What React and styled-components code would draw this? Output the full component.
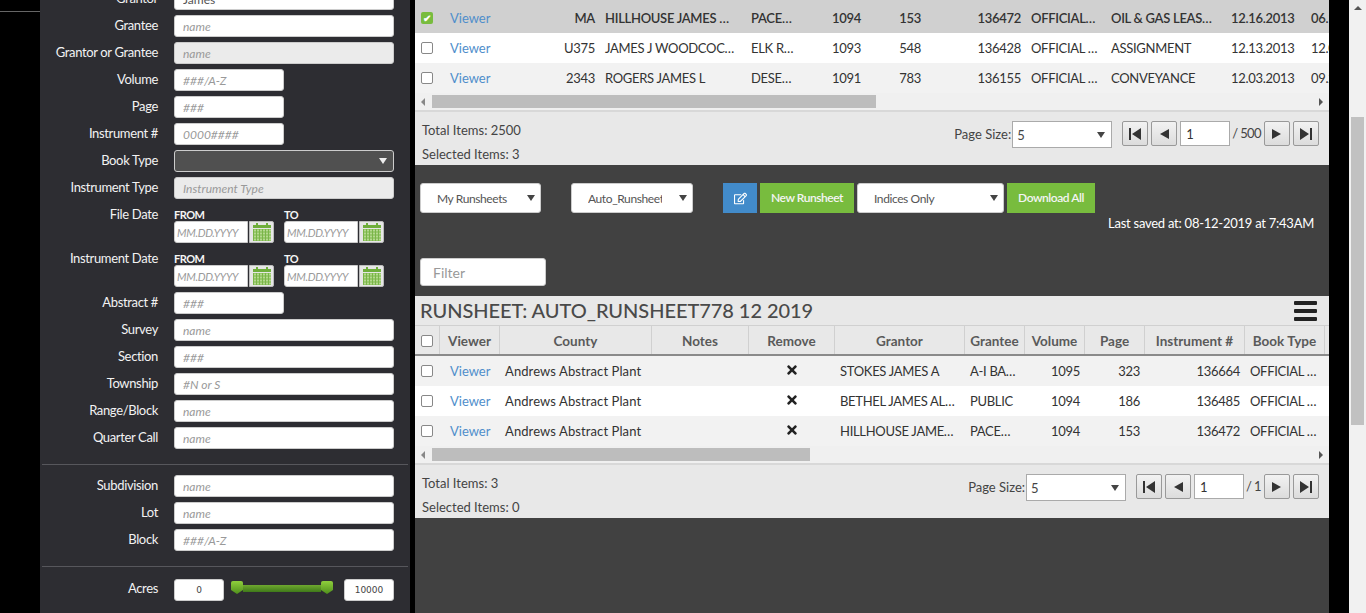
import React from 'react';
import styled, { createGlobalStyle } from 'styled-components';
import { FaRegEdit, FaTimes } from 'react-icons/fa';

const font = '"Lato", "Liberation Sans", sans-serif';

const topCols = [25, 60, 100, 146, 60, 60, 60, 100, 80, 120, 80, 80];
const bottomCols = [25, 60, 152, 97, 86, 130, 60, 60, 60, 100, 80, 80];

const topRows = [
  { selected: true, cells: ['MA', 'HILLHOUSE JAMES …', 'PACE…', '1094', '153', '136472', 'OFFICIAL…', 'OIL & GAS LEAS…', '12.16.2013', '06.16.2014'] },
  { cells: ['U375', 'JAMES J WOODCOC…', 'ELK R…', '1093', '548', '136428', 'OFFICIAL …', 'ASSIGNMENT', '12.13.2013', '12.01.2013'] },
  { cells: ['2343', 'ROGERS JAMES L', 'DESE…', '1091', '783', '136155', 'OFFICIAL …', 'CONVEYANCE', '12.03.2013', '09.25.2013'] },
];
const topRight = [true, false, false, true, true, true, false, false, false, false];

const bottomRows = [
  ['STOKES JAMES A', 'A-I BA…', '1095', '323', '136664', 'OFFICIAL …'],
  ['BETHEL JAMES AL…', 'PUBLIC', '1094', '186', '136485', 'OFFICIAL …'],
  ['HILLHOUSE JAME…', 'PACE…', '1094', '153', '136472', 'OFFICIAL …'],
];
const bottomHead = ['Viewer', 'County', 'Notes', 'Remove', 'Grantor', 'Grantee', 'Volume', 'Page', 'Instrument #', 'Book Type'];

const Calendar = () => (
  <svg width="18" height="18" viewBox="0 0 18 18">
    <rect x="3" y="0" width="2" height="3" fill="#6fae3c" />
    <rect x="13" y="0" width="2" height="3" fill="#6fae3c" />
    <rect x="0" y="2" width="18" height="3" fill="#6fae3c" />
    <rect x="0" y="6" width="18" height="12" fill="#7ab648" />
    {[7, 10, 13, 16].map((y) =>
      [1, 4, 7, 10, 13, 16].map((x) => <rect key={x + '-' + y} x={x} y={y - 0.5} width="2" height="2" fill="#b5d98f" />)
    )}
  </svg>
);

const PagerIcon = ({ kind }) => (
  <svg width="14" height="12" viewBox="0 0 14 12" fill="#333">
    {kind === 'first' && <path d="M1 0h2v12H1zM13 0v12L4 6z" />}
    {kind === 'prev' && <path d="M12 1v10L3 6z" />}
    {kind === 'next' && <path d="M2 1v10l9-5z" />}
    {kind === 'last' && <path d="M11 0h2v12h-2zM1 0v12l9-6z" />}
  </svg>
);

const Pager = ({ total }) => (
  <PagerBox>
    <PageLabel>Page Size:</PageLabel>
    <PageSelect>5<Caret /></PageSelect>
    <PagerBtn $ml={10}><PagerIcon kind="first" /></PagerBtn>
    <PagerBtn $ml={3}><PagerIcon kind="prev" /></PagerBtn>
    <PageInput readOnly value="1" />
    <PageOf>/ {total}</PageOf>
    <PagerBtn><PagerIcon kind="next" /></PagerBtn>
    <PagerBtn $ml={3}><PagerIcon kind="last" /></PagerBtn>
  </PagerBox>
);

const HScroll = ({ width }) => (
  <ScrollRow>
    <ScrollArrow $dir="left" />
    <ScrollThumb style={{ width }} />
    <ScrollArrow $dir="right" />
  </ScrollRow>
);

const Field = ({ label, placeholder, value, short, disabled }) => (
  <Row>
    <Label>{label}</Label>
    <TextInput $short={short} $disabled={disabled} placeholder={placeholder} defaultValue={value} readOnly />
  </Row>
);

const DateField = ({ label }) => (
  <DateRow>
    <Label>{label}</Label>
    {['FROM', 'TO'].map((t) => (
      <DateCol key={t}>
        <DateCaption>{t}</DateCaption>
        <DateGroup>
          <DateInput placeholder="MM.DD.YYYY" readOnly />
          <CalButton><Calendar /></CalButton>
        </DateGroup>
      </DateCol>
    ))}
  </DateRow>
);

const App = () => (
  <Shell>
    <GlobalStyle />
    <Gutter><GutterLine /></Gutter>
    <Sidebar>
      <Field label="Grantor" value="James" />
      <Field label="Grantee" placeholder="name" />
      <Field label="Grantor or Grantee" placeholder="name" disabled />
      <Field label="Volume" placeholder="###/A-Z" short />
      <Field label="Page" placeholder="###" short />
      <Field label="Instrument #" placeholder="0000####" short />
      <Row>
        <Label>Book Type</Label>
        <DarkSelect><Caret $light /></DarkSelect>
      </Row>
      <Field label="Instrument Type" placeholder="Instrument Type" disabled />
      <DateField label="File Date" />
      <DateField label="Instrument Date" />
      <Field label="Abstract #" placeholder="###" short />
      <Field label="Survey" placeholder="name" />
      <Field label="Section" placeholder="###" />
      <Field label="Township" placeholder="#N or S" />
      <Field label="Range/Block" placeholder="name" />
      <Field label="Quarter Call" placeholder="name" />
      <Divider />
      <Field label="Subdivision" placeholder="name" />
      <Field label="Lot" placeholder="name" />
      <Field label="Block" placeholder="###/A-Z" />
      <Divider $after={12} />
      <Row>
        <Label $raised>Acres</Label>
        <AcreInput readOnly value="0" />
        <Slider>
          <Handle />
          <SliderTrack />
          <Handle />
        </Slider>
        <AcreInput readOnly value="10000" />
      </Row>
    </Sidebar>
    <Main>
      <TopTable>
        {topRows.map((r, i) => (
          <TableRow key={i} $tone={r.selected ? 'selected' : i % 2 ? 'white' : 'grey'}>
            <Cell $w={topCols[0]} $check>{r.selected ? <CheckedBox>✔</CheckedBox> : <CheckBox />}</Cell>
            <Cell $w={topCols[1]}><ViewerLink>Viewer</ViewerLink></Cell>
            {r.cells.map((c, j) => (
              <Cell key={j} $w={topCols[j + 2]} $right={topRight[j]}>{c}</Cell>
            ))}
          </TableRow>
        ))}
      </TopTable>
      <HScroll width={444} />
      <Footer>
        <Counts>
          <div>Total Items: 2500</div>
          <div>Selected Items: 3</div>
        </Counts>
        <Pager total={500} />
      </Footer>

      <Toolbar>
        <ToolRow>
          <PlainSelect $w={121} $mr={27}>My Runsheets<Caret /></PlainSelect>
          <PlainSelect $w={122} $mr={27}><Clip>Auto_Runsheet</Clip><Caret /></PlainSelect>
          <EditButton><FaRegEdit size={13} /></EditButton>
          <GreenButton $w={94}>New Runsheet</GreenButton>
          <PlainSelect $w={147}>Indices Only<Caret /></PlainSelect>
          <GreenButton $w={88}>Download All</GreenButton>
        </ToolRow>
        <SavedAt>Last saved at: 08-12-2019 at 7:43AM</SavedAt>
        <FilterInput placeholder="Filter" readOnly />
      </Toolbar>

      <SheetHead>
        <SheetTitle>RUNSHEET: AUTO_RUNSHEET778 12 2019</SheetTitle>
        <Burger><i /><i /><i /></Burger>
      </SheetHead>
      <HeadRow>
        <HeadCell $w={bottomCols[0]} $check><CheckBox /></HeadCell>
        {bottomHead.map((h, i) => (
          <HeadCell key={h} $w={bottomCols[i + 1]}>{h}</HeadCell>
        ))}
      </HeadRow>
      {bottomRows.map((r, i) => (
        <TableRow key={i} $tone={i % 2 ? 'white' : 'grey'}>
          <Cell $w={bottomCols[0]} $check><CheckBox /></Cell>
          <Cell $w={bottomCols[1]}><ViewerLink>Viewer</ViewerLink></Cell>
          <Cell $w={bottomCols[2]} $plain>Andrews Abstract Plant</Cell>
          <Cell $w={bottomCols[3]} />
          <Cell $w={bottomCols[4]} $center><FaTimes size={14} color="#222" /></Cell>
          <Cell $w={bottomCols[5]}>{r[0]}</Cell>
          <Cell $w={bottomCols[6]}>{r[1]}</Cell>
          <Cell $w={bottomCols[7]} $right>{r[2]}</Cell>
          <Cell $w={bottomCols[8]} $right>{r[3]}</Cell>
          <Cell $w={bottomCols[9]} $right>{r[4]}</Cell>
          <Cell $w={bottomCols[10]}>{r[5]}</Cell>
        </TableRow>
      ))}
      <HScroll width={378} />
      <Footer>
        <Counts>
          <div>Total Items: 3</div>
          <div>Selected Items: 0</div>
        </Counts>
        <Pager total={1} />
      </Footer>
    </Main>
    <PageScroll>
      <PageScrollUp />
      <PageScrollThumb />
    </PageScroll>
  </Shell>
);

export default App;

const GlobalStyle = createGlobalStyle`
  html, body { margin: 0; padding: 0; overflow: hidden; background: #000; }
  body { font-family: ${font}; }
  * { box-sizing: border-box; }
  input::placeholder { color: #999; opacity: 1; }
`;

const Shell = styled.div`
  display: flex;
  height: 613px;
  overflow: hidden;
  background: #000;
`;

const Gutter = styled.div`
  width: 40px;
  flex: none;
`;

const GutterLine = styled.div`
  height: 12px;
  border-bottom: 1px solid #666;
`;

const Sidebar = styled.div`
  width: 370px;
  flex: none;
  height: 613px;
  background: #2d2d32;
  padding: 0 16px 0 0;
  overflow: hidden;
  & > :first-child { margin-top: -12px; }
`;

const Row = styled.div`
  display: flex;
  align-items: center;
  height: 22px;
  margin-bottom: 5px;
`;

const Label = styled.div`
  width: 118px;
  flex: none;
  margin-right: 16px;
  padding-bottom: ${(p) => (p.$raised ? '5px' : '2px')};
  text-align: right;
  color: #f2f2f2;
  font-size: 13px;
  letter-spacing: -0.35px;
  line-height: 20px;
  white-space: nowrap;
`;

const TextInput = styled.input`
  width: ${(p) => (p.$short ? '110px' : '220px')};
  height: 22px;
  padding: 0 8px;
  border: 1px solid #ccc;
  border-radius: 3px;
  background: ${(p) => (p.$disabled ? '#ebebeb' : '#fff')};
  font: 12px ${font};
  color: #555;
  outline: none;
  &::placeholder { font-style: italic; }
`;

const DarkSelect = styled.div`
  width: 220px;
  height: 22px;
  display: flex;
  align-items: center;
  justify-content: flex-end;
  padding-right: 6px;
  background: #505050;
  border: 1px solid #ccc;
  border-radius: 3px;
`;

const Caret = styled.span`
  width: 0;
  height: 0;
  margin-left: auto;
  border-left: 4px solid transparent;
  border-right: 4px solid transparent;
  border-top: 6px solid ${(p) => (p.$light ? '#eee' : '#444')};
`;

const DateRow = styled.div`
  display: flex;
  height: 39px;
  margin-bottom: 5px;
  align-items: flex-start;
`;

const DateCol = styled.div`
  width: 110px;
`;

const DateCaption = styled.div`
  height: 17px;
  padding-top: 5px;
  font-size: 11px;
  line-height: 12px;
  font-weight: 700;
  letter-spacing: -0.5px;
  color: #f5f5f5;
`;

const DateGroup = styled.div`
  display: flex;
`;

const DateInput = styled.input`
  width: 74px;
  height: 22px;
  padding: 0 2px;
  border: 1px solid #ccc;
  border-radius: 3px 0 0 3px;
  background: #fff;
  font: italic 11px ${font};
  letter-spacing: -0.3px;
  outline: none;
`;

const CalButton = styled.div`
  width: 25px;
  height: 22px;
  margin-left: 1px;
  display: flex;
  align-items: center;
  justify-content: center;
  background: #e6e6e6;
  border: 1px solid #bbb;
  border-radius: 0 2px 2px 0;
`;

const Divider = styled.div`
  height: 1px;
  margin: 15px -14px ${(p) => p.$after || 10}px 2px;
  background: #57575c;
`;

const AcreInput = styled.input`
  width: 50px;
  height: 22px;
  border: 1px solid #ccc;
  border-radius: 3px;
  background: #fff;
  text-align: center;
  font: 9px "DejaVu Sans", sans-serif;
  color: #444;
  outline: none;
`;

const Slider = styled.div`
  width: 120px;
  padding: 0 11px 0 7px;
  display: flex;
  align-items: center;
`;

const Handle = styled.div`
  width: 12px;
  height: 13px;
  flex: none;
  margin-top: -5px;
  background: linear-gradient(#8fcf3c, #4f8f1c);
  clip-path: polygon(0 0, 100% 0, 100% 70%, 50% 100%, 0 70%);
  border-radius: 2px 2px 0 0;
`;

const SliderTrack = styled.div`
  flex: 1;
  height: 7px;
  margin-top: -3px;
  background: linear-gradient(#6fa82f, #3f7a1a);
`;

const Main = styled.div`
  width: 914px;
  flex: none;
  margin-left: 5px;
  background: #414141;
  overflow: hidden;
  font-size: 13px;
  color: #333;
`;

const TopTable = styled.div`
  padding-top: 3px;
  background: #d0d0d0;
`;

const tones = { selected: '#d0d0d0', white: '#fff', grey: '#f2f2f2' };

const TableRow = styled.div`
  display: flex;
  height: 30px;
  align-items: center;
  background: ${(p) => tones[p.$tone]};
  font-weight: ${(p) => (p.$tone === 'selected' ? 600 : 400)};
`;

const Cell = styled.div`
  width: ${(p) => p.$w}px;
  flex: none;
  padding: ${(p) => (p.$check ? '0 0 0 6px' : '0 5px')};
  letter-spacing: ${(p) => (p.$plain ? '0.1px' : '-0.3px')};
  text-align: ${(p) => (p.$right ? 'right' : p.$center ? 'center' : 'left')};
  white-space: nowrap;
  overflow: hidden;
  display: ${(p) => (p.$check ? 'flex' : 'block')};
`;

const CheckBox = styled.span`
  display: block;
  width: 12px;
  height: 12px;
  border: 1px solid #888;
  border-radius: 2px;
  background: #fff;
`;

const CheckedBox = styled.span`
  display: flex;
  align-items: center;
  justify-content: center;
  width: 12px;
  height: 12px;
  border-radius: 2px;
  background: #78bc3e;
  color: #fff;
  font-size: 10px;
  line-height: 1;
`;

const ViewerLink = styled.span`
  color: #4f8ecb;
  margin-left: 5px;
  font-weight: 400;
  letter-spacing: 0;
`;

const ScrollRow = styled.div`
  display: flex;
  align-items: center;
  height: 17px;
  padding: 0 6px;
  background: #f0f0f0;
`;

const ScrollArrow = styled.span`
  width: 0;
  height: 0;
  border-top: 4px solid transparent;
  border-bottom: 4px solid transparent;
  ${(p) => (p.$dir === 'left'
    ? 'border-right: 4px solid #888; margin-right: 7px;'
    : 'border-left: 4px solid #555; margin-left: auto;')}
`;

const ScrollThumb = styled.div`
  height: 13px;
  background: #bdbdbd;
`;

const Footer = styled.div`
  display: flex;
  justify-content: space-between;
  height: 55px;
  padding: 6px 10px 0 7px;
  background: #e8e8e8;
  border-top: 2px solid #d8d8d8;
  color: #444;
`;

const Counts = styled.div`
  line-height: 24px;
`;

const PagerBox = styled.div`
  display: flex;
  align-items: flex-start;
  padding-top: 3px;
`;

const PageLabel = styled.span`
  line-height: 27px;
  margin-right: 1px;
`;

const PageSelect = styled.div`
  width: 100px;
  height: 27px;
  display: flex;
  align-items: center;
  padding: 0 6px 0 4px;
  background: #fff;
  border: 1px solid #aaa;
`;

const PagerBtn = styled.div`
  width: 26px;
  height: 25px;
  margin-left: ${(p) => p.$ml || 0}px;
  display: flex;
  align-items: center;
  justify-content: center;
  background: linear-gradient(#f2f2f2, #dcdcdc);
  border: 1px solid #999;
  border-radius: 2px;
`;

const PageInput = styled.input`
  width: 50px;
  height: 25px;
  margin-left: 3px;
  padding: 0 5px;
  border: 1px solid #aaa;
  background: #fff;
  font: 13px ${font};
  color: #333;
  outline: none;
`;

const PageOf = styled.span`
  line-height: 24px;
  margin: 0 3px 0 2px;
  letter-spacing: -0.6px;
`;

const Toolbar = styled.div`
  height: 131px;
  padding: 18px 0 0 5px;
`;

const ToolRow = styled.div`
  display: flex;
  height: 30px;
  gap: 3px;
`;

const PlainSelect = styled.div`
  width: ${(p) => p.$w}px;
  margin-right: ${(p) => p.$mr || 0}px;
  height: 30px;
  display: flex;
  align-items: center;
  padding: 0 5px 0 16px;
  background: #fff;
  border: 1px solid #ccc;
  border-radius: 3px;
  font-size: 12px;
  letter-spacing: -0.4px;
  color: #555;
`;

const Clip = styled.span`
  width: 74px;
  overflow: hidden;
  white-space: nowrap;
`;

const EditButton = styled.div`
  width: 34px;
  display: flex;
  align-items: center;
  justify-content: center;
  background: #428bca;
  color: #fff;
`;

const GreenButton = styled.div`
  width: ${(p) => p.$w}px;
  display: flex;
  align-items: center;
  justify-content: center;
  padding-bottom: 1px;
  background: #78bc3e;
  color: #f4f4f4;
  font-size: 12px;
  font-weight: 600;
  letter-spacing: -0.45px;
`;

const SavedAt = styled.div`
  padding-right: 15px;
  text-align: right;
  color: #fff;
  font-size: 13px;
  letter-spacing: -0.25px;
  line-height: 20px;
`;

const FilterInput = styled.input`
  display: block;
  width: 126px;
  height: 28px;
  margin-top: 25px;
  padding: 0 12px;
  border: 1px solid #ccc;
  border-radius: 3px;
  background: #fff;
  font: 14px ${font};
  outline: none;
`;

const SheetHead = styled.div`
  display: flex;
  align-items: center;
  justify-content: space-between;
  height: 29px;
  padding: 0 12px 2px 5px;
  background: #e8e8e8;
`;

const SheetTitle = styled.div`
  font-size: 20px;
  font-weight: 500;
  letter-spacing: -0.05px;
  color: #4a4a4a;
`;

const Burger = styled.div`
  width: 23px;
  margin-top: 2px;
  display: flex;
  flex-direction: column;
  gap: 4px;
  & > i { display: block; height: 4px; background: #222; border-radius: 1px; }
`;

const HeadRow = styled.div`
  display: flex;
  height: 31px;
  background: #e8e8e8;
  border-top: 1px solid #d0d0d0;
  border-bottom: 2px solid #8a8a8a;
`;

const HeadCell = styled.div`
  width: ${(p) => p.$w}px;
  flex: none;
  display: flex;
  align-items: center;
  justify-content: ${(p) => (p.$check ? 'flex-start' : 'center')};
  padding-left: ${(p) => (p.$check ? '6px' : '0')};
  padding-top: 1px;
  border-right: 1px solid #d0d0d0;
  font-size: 13.5px;
  font-weight: 700;
  color: #5a5a5a;
  white-space: nowrap;
`;

const PageScroll = styled.div`
  width: 17px;
  flex: none;
  height: 613px;
  margin-left: 20px;
  background: #f1f1f1;
  position: relative;
`;

const PageScrollUp = styled.div`
  position: absolute;
  top: 6px;
  left: 5px;
  border-left: 4px solid transparent;
  border-right: 4px solid transparent;
  border-bottom: 4px solid #555;
`;

const PageScrollThumb = styled.div`
  position: absolute;
  top: 117px;
  left: 2px;
  width: 13px;
  height: 308px;
  background: #c1c1c1;
`;
